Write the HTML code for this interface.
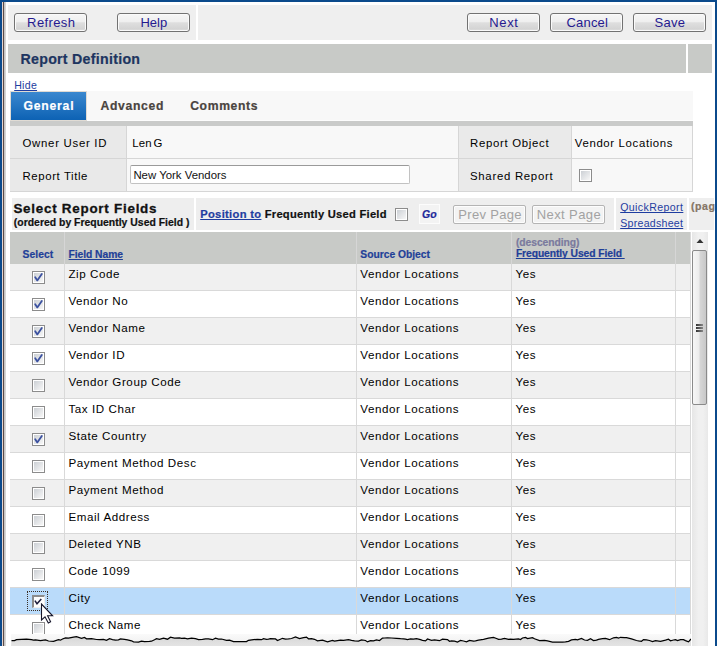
<!DOCTYPE html>
<html><head><meta charset="utf-8"><style>
html,body{margin:0;padding:0;width:717px;height:646px;overflow:hidden;background:#fff;font-family:"Liberation Sans", sans-serif;}
</style></head><body>
<div style="position:absolute;left:0px;top:0px;width:717px;height:646px;background:#fff"></div><div style="position:absolute;left:8px;top:5px;width:188px;height:35px;background:#efefef"></div><div style="position:absolute;left:198px;top:5px;width:514px;height:35px;background:#efefef"></div><div style="position:absolute;left:14px;top:13px;width:71px;height:17px;border:1px solid #727272;border-radius:3px;background:linear-gradient(#f6f6f6 0%,#efefef 45%,#dedede 52%,#d4d4d4 88%,#e2e2e2 100%);box-shadow:inset 0 0 0 1px #fafafa"></div><div style="position:absolute;left:27.10px;top:16px;font-size:13.00px;line-height:1;font-weight:normal;font-style:normal;letter-spacing:0.398px;white-space:pre;color:#25198f">Refresh</div><div style="position:absolute;left:117px;top:13px;width:71px;height:17px;border:1px solid #727272;border-radius:3px;background:linear-gradient(#f6f6f6 0%,#efefef 45%,#dedede 52%,#d4d4d4 88%,#e2e2e2 100%);box-shadow:inset 0 0 0 1px #fafafa"></div><div style="position:absolute;left:140.40px;top:16px;font-size:13.00px;line-height:1;font-weight:normal;font-style:normal;letter-spacing:0.020px;white-space:pre;color:#25198f">Help</div><div style="position:absolute;left:467px;top:13px;width:71px;height:17px;border:1px solid #727272;border-radius:3px;background:linear-gradient(#f6f6f6 0%,#efefef 45%,#dedede 52%,#d4d4d4 88%,#e2e2e2 100%);box-shadow:inset 0 0 0 1px #fafafa"></div><div style="position:absolute;left:489.30px;top:16px;font-size:13.00px;line-height:1;font-weight:normal;font-style:normal;letter-spacing:0.624px;white-space:pre;color:#25198f">Next</div><div style="position:absolute;left:550px;top:13px;width:71px;height:17px;border:1px solid #727272;border-radius:3px;background:linear-gradient(#f6f6f6 0%,#efefef 45%,#dedede 52%,#d4d4d4 88%,#e2e2e2 100%);box-shadow:inset 0 0 0 1px #fafafa"></div><div style="position:absolute;left:566.50px;top:16px;font-size:13.00px;line-height:1;font-weight:normal;font-style:normal;letter-spacing:0.186px;white-space:pre;color:#25198f">Cancel</div><div style="position:absolute;left:633px;top:13px;width:71px;height:17px;border:1px solid #727272;border-radius:3px;background:linear-gradient(#f6f6f6 0%,#efefef 45%,#dedede 52%,#d4d4d4 88%,#e2e2e2 100%);box-shadow:inset 0 0 0 1px #fafafa"></div><div style="position:absolute;left:654.60px;top:16px;font-size:13.00px;line-height:1;font-weight:normal;font-style:normal;letter-spacing:0.224px;white-space:pre;color:#25198f">Save</div><div style="position:absolute;left:8px;top:44px;width:678px;height:29px;background:#c8cac7"></div><div style="position:absolute;left:688px;top:44px;width:24px;height:29px;background:#c8cac7"></div><div style="position:absolute;left:20.50px;top:52px;font-size:14.20px;line-height:1;font-weight:bold;font-style:normal;letter-spacing:0.277px;white-space:pre;color:#1d3560;-webkit-text-stroke:0.2px currentColor">Report Definition</div><div style="position:absolute;left:14.20px;top:80px;font-size:10.60px;line-height:1;font-weight:normal;font-style:normal;letter-spacing:0.265px;white-space:pre;color:#1e3da0;text-decoration:underline;text-decoration-skip-ink:none;">Hide</div><div style="position:absolute;left:10px;top:91px;width:683px;height:30px;background:#f8f8f8"></div><div style="position:absolute;left:10px;top:120px;width:683px;height:1px;background:#fdfdfd"></div><div style="position:absolute;left:10px;top:91px;width:77px;height:30px;background:#e0dbd4"></div><div style="position:absolute;left:11px;top:92px;width:75px;height:28px;background:linear-gradient(#3b88cf,#0d62b4)"></div><div style="position:absolute;left:23.40px;top:100px;font-size:12.20px;line-height:1;font-weight:bold;font-style:normal;letter-spacing:0.795px;white-space:pre;color:#fff;-webkit-text-stroke:0.2px currentColor">General</div><div style="position:absolute;left:100.60px;top:100px;font-size:12.20px;line-height:1;font-weight:bold;font-style:normal;letter-spacing:0.642px;white-space:pre;color:#4a4440;-webkit-text-stroke:0.2px currentColor">Advanced</div><div style="position:absolute;left:190.20px;top:100px;font-size:12.20px;line-height:1;font-weight:bold;font-style:normal;letter-spacing:0.621px;white-space:pre;color:#4a4440;-webkit-text-stroke:0.2px currentColor">Comments</div><div style="position:absolute;left:10px;top:121px;width:683px;height:5px;background:#cacbca"></div><div style="position:absolute;left:10px;top:126px;width:683px;height:66px;background:#d6d6d6"></div><div style="position:absolute;left:10px;top:126px;width:116px;height:32px;background:#e9e9e9"></div><div style="position:absolute;left:127px;top:126px;width:331px;height:32px;background:#f8f8f8"></div><div style="position:absolute;left:459px;top:126px;width:112px;height:32px;background:#eaeaea"></div><div style="position:absolute;left:572px;top:126px;width:120px;height:32px;background:#f8f8f8"></div><div style="position:absolute;left:10px;top:159px;width:116px;height:32px;background:#e9e9e9"></div><div style="position:absolute;left:127px;top:159px;width:331px;height:32px;background:#f8f8f8"></div><div style="position:absolute;left:459px;top:159px;width:112px;height:32px;background:#eaeaea"></div><div style="position:absolute;left:572px;top:159px;width:120px;height:32px;background:#f8f8f8"></div><div style="position:absolute;left:22.50px;top:138px;font-size:11.40px;line-height:1;font-weight:normal;font-style:normal;letter-spacing:0.719px;white-space:pre;color:#000">Owner User ID</div><div style="position:absolute;left:132.30px;top:138px;font-size:11.40px;line-height:1;font-weight:normal;font-style:normal;letter-spacing:0.092px;white-space:pre;color:#000">Len</div><div style="position:absolute;left:153.60px;top:138px;font-size:11.40px;line-height:1;font-weight:normal;font-style:normal;letter-spacing:0.000px;white-space:pre;color:#000">G</div><div style="position:absolute;left:22.50px;top:171px;font-size:11.40px;line-height:1;font-weight:normal;font-style:normal;letter-spacing:0.610px;white-space:pre;color:#000">Report Title</div><div style="position:absolute;left:470.00px;top:138px;font-size:11.40px;line-height:1;font-weight:normal;font-style:normal;letter-spacing:0.698px;white-space:pre;color:#000">Report Object</div><div style="position:absolute;left:574.80px;top:138px;font-size:11.40px;line-height:1;font-weight:normal;font-style:normal;letter-spacing:0.647px;white-space:pre;color:#000">Vendor Locations</div><div style="position:absolute;left:470.00px;top:171px;font-size:11.40px;line-height:1;font-weight:normal;font-style:normal;letter-spacing:0.713px;white-space:pre;color:#000">Shared Report</div><div style="position:absolute;left:130px;top:165px;width:278px;height:17px;background:#fff;border:1px solid #c2c2c2;border-top-color:#9a9a9a;border-radius:2px"></div><div style="position:absolute;left:133.40px;top:170px;font-size:11.40px;line-height:1;font-weight:normal;font-style:normal;letter-spacing:0.003px;white-space:pre;color:#111">New York Vendors</div><div style="position:absolute;left:579px;top:169px;width:11px;height:11px;border:1px solid #8c8c8c;background:#fff"></div><div style="position:absolute;left:581px;top:171px;width:9px;height:9px;background:linear-gradient(135deg,#ccd0d5,#f7f7f7)"></div><div style="position:absolute;left:12px;top:198px;width:182px;height:32px;background:#eeeeee"></div><div style="position:absolute;left:13.40px;top:202px;font-size:13.40px;line-height:1;font-weight:bold;font-style:normal;letter-spacing:0.756px;white-space:pre;color:#111;-webkit-text-stroke:0.3px #111">Select Report Fields</div><div style="position:absolute;left:13.80px;top:218px;font-size:10.40px;line-height:1;font-weight:bold;font-style:normal;letter-spacing:0.021px;white-space:pre;color:#111;-webkit-text-stroke:0.2px currentColor">(ordered by Frequently Used Field )</div><div style="position:absolute;left:196px;top:198px;width:418px;height:32px;background:#eeeeee"></div><div style="position:absolute;left:200.20px;top:209px;font-size:11.20px;line-height:1;font-weight:bold;font-style:normal;letter-spacing:0.314px;white-space:pre;color:#1e3da0;text-decoration:underline;text-decoration-skip-ink:none;;-webkit-text-stroke:0.2px currentColor">Position to</div><div style="position:absolute;left:264.70px;top:209px;font-size:11.20px;line-height:1;font-weight:bold;font-style:normal;letter-spacing:0.250px;white-space:pre;color:#111;-webkit-text-stroke:0.2px currentColor">Frequently Used Field</div><div style="position:absolute;left:395px;top:208px;width:11px;height:11px;border:1px solid #8c8c8c;background:#fff"></div><div style="position:absolute;left:397px;top:210px;width:9px;height:9px;background:linear-gradient(135deg,#ccd0d5,#f7f7f7)"></div><div style="position:absolute;left:419px;top:204px;width:21px;height:20px;background:#f3f3f3;border:1px solid #fcfcfc;box-sizing:border-box"></div><div style="position:absolute;left:422.00px;top:209px;font-size:10.50px;line-height:1;font-weight:bold;font-style:italic;letter-spacing:0.016px;white-space:pre;color:#1e2a9a;-webkit-text-stroke:0.2px currentColor">Go</div><div style="position:absolute;left:453px;top:205px;width:71px;height:17px;border:1px solid #b4b4b4;border-radius:2px;background:#f3f3f3;box-shadow:inset 0 0 0 1px #fdfdfd"></div><div style="position:absolute;left:458.30px;top:208px;font-size:13.00px;line-height:1;font-weight:normal;font-style:normal;letter-spacing:0.325px;white-space:pre;color:#a2a2a2">Prev Page</div><div style="position:absolute;left:532px;top:205px;width:71px;height:17px;border:1px solid #b4b4b4;border-radius:2px;background:#f3f3f3;box-shadow:inset 0 0 0 1px #fdfdfd"></div><div style="position:absolute;left:536.70px;top:208px;font-size:13.00px;line-height:1;font-weight:normal;font-style:normal;letter-spacing:0.413px;white-space:pre;color:#a2a2a2">Next Page</div><div style="position:absolute;left:616px;top:198px;width:71px;height:32px;background:#eeeeee"></div><div style="position:absolute;left:620.20px;top:202px;font-size:10.60px;line-height:1;font-weight:normal;font-style:normal;letter-spacing:0.389px;white-space:pre;color:#1e3da0;text-decoration:underline;text-decoration-skip-ink:none;">QuickReport</div><div style="position:absolute;left:620.20px;top:218px;font-size:10.60px;line-height:1;font-weight:normal;font-style:normal;letter-spacing:0.269px;white-space:pre;color:#1e3da0;text-decoration:underline;text-decoration-skip-ink:none;">Spreadsheet</div><div style="position:absolute;left:689px;top:198px;width:25px;height:32px;background:#eeeeee"></div><div style="position:absolute;left:690.90px;top:201px;font-size:10.60px;line-height:1;font-weight:bold;font-style:normal;letter-spacing:0.600px;white-space:pre;color:#857565;-webkit-text-stroke:0.2px currentColor">(pag</div><div style="position:absolute;left:10px;top:232px;width:681px;height:402px;background:#d9d9d9"></div><div style="position:absolute;left:10px;top:232px;width:680px;height:32px;background:#c8cac7"></div><div style="position:absolute;left:64px;top:232px;width:1px;height:32px;background:#d6d6d6"></div><div style="position:absolute;left:356px;top:232px;width:1px;height:32px;background:#d6d6d6"></div><div style="position:absolute;left:511px;top:232px;width:1px;height:32px;background:#d6d6d6"></div><div style="position:absolute;left:675px;top:232px;width:1px;height:32px;background:#d6d6d6"></div><div style="position:absolute;left:22.50px;top:250px;font-size:10.30px;line-height:1;font-weight:bold;font-style:normal;letter-spacing:0.071px;white-space:pre;color:#1f3f98;;-webkit-text-stroke:0.2px currentColor">Select</div><div style="position:absolute;left:68.60px;top:250px;font-size:10.30px;line-height:1;font-weight:bold;font-style:normal;letter-spacing:-0.061px;white-space:pre;color:#1f3f98;text-decoration:underline;text-decoration-skip-ink:none;;-webkit-text-stroke:0.2px currentColor">Field Name</div><div style="position:absolute;left:360.30px;top:250px;font-size:10.30px;line-height:1;font-weight:bold;font-style:normal;letter-spacing:-0.011px;white-space:pre;color:#1f3f98;;-webkit-text-stroke:0.2px currentColor">Source Object</div><div style="position:absolute;left:515.90px;top:238px;font-size:10.30px;line-height:1;font-weight:bold;font-style:normal;letter-spacing:-0.045px;white-space:pre;color:#7a7a9e;-webkit-text-stroke:0.2px currentColor">(descending)</div><div style="position:absolute;left:515.90px;top:249px;font-size:10.30px;line-height:1;font-weight:bold;font-style:normal;letter-spacing:-0.075px;white-space:pre;color:#1f3f98;text-decoration:underline;text-decoration-skip-ink:none;;-webkit-text-stroke:0.2px currentColor">Frequently Used Field&nbsp;</div><div style="position:absolute;left:10px;top:264px;width:54px;height:26px;background:#f0f0f0"></div><div style="position:absolute;left:65px;top:264px;width:291px;height:26px;background:#f0f0f0"></div><div style="position:absolute;left:357px;top:264px;width:154px;height:26px;background:#f0f0f0"></div><div style="position:absolute;left:512px;top:264px;width:163px;height:26px;background:#f0f0f0"></div><div style="position:absolute;left:676px;top:264px;width:14px;height:26px;background:#f0f0f0"></div><div style="position:absolute;left:32px;top:271px;width:11px;height:11px;border:1px solid #8c8c8c;background:#fff"></div><div style="position:absolute;left:34px;top:273px;width:9px;height:9px;background:linear-gradient(135deg,#ccd0d5,#f7f7f7)"></div><svg style="position:absolute;left:32px;top:271px" width="13" height="13" viewBox="0 0 13 13"><path d="M3.2 6.2 L5.3 9.4 L9.8 3" fill="none" stroke="#3b51a0" stroke-width="1.8" stroke-linejoin="round" stroke-linecap="round"/></svg><div style="position:absolute;left:68.40px;top:268px;font-size:11.60px;line-height:1;font-weight:normal;font-style:normal;letter-spacing:0.570px;white-space:pre;color:#000">Zip Code</div><div style="position:absolute;left:360.30px;top:268px;font-size:11.60px;line-height:1;font-weight:normal;font-style:normal;letter-spacing:0.570px;white-space:pre;color:#000">Vendor Locations</div><div style="position:absolute;left:515.50px;top:268px;font-size:11.60px;line-height:1;font-weight:normal;font-style:normal;letter-spacing:0.570px;white-space:pre;color:#000">Yes</div><div style="position:absolute;left:10px;top:291px;width:54px;height:26px;background:#ffffff"></div><div style="position:absolute;left:65px;top:291px;width:291px;height:26px;background:#ffffff"></div><div style="position:absolute;left:357px;top:291px;width:154px;height:26px;background:#ffffff"></div><div style="position:absolute;left:512px;top:291px;width:163px;height:26px;background:#ffffff"></div><div style="position:absolute;left:676px;top:291px;width:14px;height:26px;background:#ffffff"></div><div style="position:absolute;left:32px;top:298px;width:11px;height:11px;border:1px solid #8c8c8c;background:#fff"></div><div style="position:absolute;left:34px;top:300px;width:9px;height:9px;background:linear-gradient(135deg,#ccd0d5,#f7f7f7)"></div><svg style="position:absolute;left:32px;top:298px" width="13" height="13" viewBox="0 0 13 13"><path d="M3.2 6.2 L5.3 9.4 L9.8 3" fill="none" stroke="#3b51a0" stroke-width="1.8" stroke-linejoin="round" stroke-linecap="round"/></svg><div style="position:absolute;left:68.40px;top:295px;font-size:11.60px;line-height:1;font-weight:normal;font-style:normal;letter-spacing:0.570px;white-space:pre;color:#000">Vendor No</div><div style="position:absolute;left:360.30px;top:295px;font-size:11.60px;line-height:1;font-weight:normal;font-style:normal;letter-spacing:0.570px;white-space:pre;color:#000">Vendor Locations</div><div style="position:absolute;left:515.50px;top:295px;font-size:11.60px;line-height:1;font-weight:normal;font-style:normal;letter-spacing:0.570px;white-space:pre;color:#000">Yes</div><div style="position:absolute;left:10px;top:318px;width:54px;height:26px;background:#f0f0f0"></div><div style="position:absolute;left:65px;top:318px;width:291px;height:26px;background:#f0f0f0"></div><div style="position:absolute;left:357px;top:318px;width:154px;height:26px;background:#f0f0f0"></div><div style="position:absolute;left:512px;top:318px;width:163px;height:26px;background:#f0f0f0"></div><div style="position:absolute;left:676px;top:318px;width:14px;height:26px;background:#f0f0f0"></div><div style="position:absolute;left:32px;top:325px;width:11px;height:11px;border:1px solid #8c8c8c;background:#fff"></div><div style="position:absolute;left:34px;top:327px;width:9px;height:9px;background:linear-gradient(135deg,#ccd0d5,#f7f7f7)"></div><svg style="position:absolute;left:32px;top:325px" width="13" height="13" viewBox="0 0 13 13"><path d="M3.2 6.2 L5.3 9.4 L9.8 3" fill="none" stroke="#3b51a0" stroke-width="1.8" stroke-linejoin="round" stroke-linecap="round"/></svg><div style="position:absolute;left:68.40px;top:322px;font-size:11.60px;line-height:1;font-weight:normal;font-style:normal;letter-spacing:0.570px;white-space:pre;color:#000">Vendor Name</div><div style="position:absolute;left:360.30px;top:322px;font-size:11.60px;line-height:1;font-weight:normal;font-style:normal;letter-spacing:0.570px;white-space:pre;color:#000">Vendor Locations</div><div style="position:absolute;left:515.50px;top:322px;font-size:11.60px;line-height:1;font-weight:normal;font-style:normal;letter-spacing:0.570px;white-space:pre;color:#000">Yes</div><div style="position:absolute;left:10px;top:345px;width:54px;height:26px;background:#ffffff"></div><div style="position:absolute;left:65px;top:345px;width:291px;height:26px;background:#ffffff"></div><div style="position:absolute;left:357px;top:345px;width:154px;height:26px;background:#ffffff"></div><div style="position:absolute;left:512px;top:345px;width:163px;height:26px;background:#ffffff"></div><div style="position:absolute;left:676px;top:345px;width:14px;height:26px;background:#ffffff"></div><div style="position:absolute;left:32px;top:352px;width:11px;height:11px;border:1px solid #8c8c8c;background:#fff"></div><div style="position:absolute;left:34px;top:354px;width:9px;height:9px;background:linear-gradient(135deg,#ccd0d5,#f7f7f7)"></div><svg style="position:absolute;left:32px;top:352px" width="13" height="13" viewBox="0 0 13 13"><path d="M3.2 6.2 L5.3 9.4 L9.8 3" fill="none" stroke="#3b51a0" stroke-width="1.8" stroke-linejoin="round" stroke-linecap="round"/></svg><div style="position:absolute;left:68.40px;top:349px;font-size:11.60px;line-height:1;font-weight:normal;font-style:normal;letter-spacing:0.570px;white-space:pre;color:#000">Vendor ID</div><div style="position:absolute;left:360.30px;top:349px;font-size:11.60px;line-height:1;font-weight:normal;font-style:normal;letter-spacing:0.570px;white-space:pre;color:#000">Vendor Locations</div><div style="position:absolute;left:515.50px;top:349px;font-size:11.60px;line-height:1;font-weight:normal;font-style:normal;letter-spacing:0.570px;white-space:pre;color:#000">Yes</div><div style="position:absolute;left:10px;top:372px;width:54px;height:26px;background:#f0f0f0"></div><div style="position:absolute;left:65px;top:372px;width:291px;height:26px;background:#f0f0f0"></div><div style="position:absolute;left:357px;top:372px;width:154px;height:26px;background:#f0f0f0"></div><div style="position:absolute;left:512px;top:372px;width:163px;height:26px;background:#f0f0f0"></div><div style="position:absolute;left:676px;top:372px;width:14px;height:26px;background:#f0f0f0"></div><div style="position:absolute;left:32px;top:379px;width:11px;height:11px;border:1px solid #8c8c8c;background:#fff"></div><div style="position:absolute;left:34px;top:381px;width:9px;height:9px;background:linear-gradient(135deg,#ccd0d5,#f7f7f7)"></div><div style="position:absolute;left:68.40px;top:376px;font-size:11.60px;line-height:1;font-weight:normal;font-style:normal;letter-spacing:0.570px;white-space:pre;color:#000">Vendor Group Code</div><div style="position:absolute;left:360.30px;top:376px;font-size:11.60px;line-height:1;font-weight:normal;font-style:normal;letter-spacing:0.570px;white-space:pre;color:#000">Vendor Locations</div><div style="position:absolute;left:515.50px;top:376px;font-size:11.60px;line-height:1;font-weight:normal;font-style:normal;letter-spacing:0.570px;white-space:pre;color:#000">Yes</div><div style="position:absolute;left:10px;top:399px;width:54px;height:26px;background:#ffffff"></div><div style="position:absolute;left:65px;top:399px;width:291px;height:26px;background:#ffffff"></div><div style="position:absolute;left:357px;top:399px;width:154px;height:26px;background:#ffffff"></div><div style="position:absolute;left:512px;top:399px;width:163px;height:26px;background:#ffffff"></div><div style="position:absolute;left:676px;top:399px;width:14px;height:26px;background:#ffffff"></div><div style="position:absolute;left:32px;top:406px;width:11px;height:11px;border:1px solid #8c8c8c;background:#fff"></div><div style="position:absolute;left:34px;top:408px;width:9px;height:9px;background:linear-gradient(135deg,#ccd0d5,#f7f7f7)"></div><div style="position:absolute;left:68.40px;top:403px;font-size:11.60px;line-height:1;font-weight:normal;font-style:normal;letter-spacing:0.570px;white-space:pre;color:#000">Tax ID Char</div><div style="position:absolute;left:360.30px;top:403px;font-size:11.60px;line-height:1;font-weight:normal;font-style:normal;letter-spacing:0.570px;white-space:pre;color:#000">Vendor Locations</div><div style="position:absolute;left:515.50px;top:403px;font-size:11.60px;line-height:1;font-weight:normal;font-style:normal;letter-spacing:0.570px;white-space:pre;color:#000">Yes</div><div style="position:absolute;left:10px;top:426px;width:54px;height:26px;background:#f0f0f0"></div><div style="position:absolute;left:65px;top:426px;width:291px;height:26px;background:#f0f0f0"></div><div style="position:absolute;left:357px;top:426px;width:154px;height:26px;background:#f0f0f0"></div><div style="position:absolute;left:512px;top:426px;width:163px;height:26px;background:#f0f0f0"></div><div style="position:absolute;left:676px;top:426px;width:14px;height:26px;background:#f0f0f0"></div><div style="position:absolute;left:32px;top:433px;width:11px;height:11px;border:1px solid #8c8c8c;background:#fff"></div><div style="position:absolute;left:34px;top:435px;width:9px;height:9px;background:linear-gradient(135deg,#ccd0d5,#f7f7f7)"></div><svg style="position:absolute;left:32px;top:433px" width="13" height="13" viewBox="0 0 13 13"><path d="M3.2 6.2 L5.3 9.4 L9.8 3" fill="none" stroke="#3b51a0" stroke-width="1.8" stroke-linejoin="round" stroke-linecap="round"/></svg><div style="position:absolute;left:68.40px;top:430px;font-size:11.60px;line-height:1;font-weight:normal;font-style:normal;letter-spacing:0.570px;white-space:pre;color:#000">State Country</div><div style="position:absolute;left:360.30px;top:430px;font-size:11.60px;line-height:1;font-weight:normal;font-style:normal;letter-spacing:0.570px;white-space:pre;color:#000">Vendor Locations</div><div style="position:absolute;left:515.50px;top:430px;font-size:11.60px;line-height:1;font-weight:normal;font-style:normal;letter-spacing:0.570px;white-space:pre;color:#000">Yes</div><div style="position:absolute;left:10px;top:453px;width:54px;height:26px;background:#ffffff"></div><div style="position:absolute;left:65px;top:453px;width:291px;height:26px;background:#ffffff"></div><div style="position:absolute;left:357px;top:453px;width:154px;height:26px;background:#ffffff"></div><div style="position:absolute;left:512px;top:453px;width:163px;height:26px;background:#ffffff"></div><div style="position:absolute;left:676px;top:453px;width:14px;height:26px;background:#ffffff"></div><div style="position:absolute;left:32px;top:460px;width:11px;height:11px;border:1px solid #8c8c8c;background:#fff"></div><div style="position:absolute;left:34px;top:462px;width:9px;height:9px;background:linear-gradient(135deg,#ccd0d5,#f7f7f7)"></div><div style="position:absolute;left:68.40px;top:457px;font-size:11.60px;line-height:1;font-weight:normal;font-style:normal;letter-spacing:0.570px;white-space:pre;color:#000">Payment Method Desc</div><div style="position:absolute;left:360.30px;top:457px;font-size:11.60px;line-height:1;font-weight:normal;font-style:normal;letter-spacing:0.570px;white-space:pre;color:#000">Vendor Locations</div><div style="position:absolute;left:515.50px;top:457px;font-size:11.60px;line-height:1;font-weight:normal;font-style:normal;letter-spacing:0.570px;white-space:pre;color:#000">Yes</div><div style="position:absolute;left:10px;top:480px;width:54px;height:26px;background:#f0f0f0"></div><div style="position:absolute;left:65px;top:480px;width:291px;height:26px;background:#f0f0f0"></div><div style="position:absolute;left:357px;top:480px;width:154px;height:26px;background:#f0f0f0"></div><div style="position:absolute;left:512px;top:480px;width:163px;height:26px;background:#f0f0f0"></div><div style="position:absolute;left:676px;top:480px;width:14px;height:26px;background:#f0f0f0"></div><div style="position:absolute;left:32px;top:487px;width:11px;height:11px;border:1px solid #8c8c8c;background:#fff"></div><div style="position:absolute;left:34px;top:489px;width:9px;height:9px;background:linear-gradient(135deg,#ccd0d5,#f7f7f7)"></div><div style="position:absolute;left:68.40px;top:484px;font-size:11.60px;line-height:1;font-weight:normal;font-style:normal;letter-spacing:0.570px;white-space:pre;color:#000">Payment Method</div><div style="position:absolute;left:360.30px;top:484px;font-size:11.60px;line-height:1;font-weight:normal;font-style:normal;letter-spacing:0.570px;white-space:pre;color:#000">Vendor Locations</div><div style="position:absolute;left:515.50px;top:484px;font-size:11.60px;line-height:1;font-weight:normal;font-style:normal;letter-spacing:0.570px;white-space:pre;color:#000">Yes</div><div style="position:absolute;left:10px;top:507px;width:54px;height:26px;background:#ffffff"></div><div style="position:absolute;left:65px;top:507px;width:291px;height:26px;background:#ffffff"></div><div style="position:absolute;left:357px;top:507px;width:154px;height:26px;background:#ffffff"></div><div style="position:absolute;left:512px;top:507px;width:163px;height:26px;background:#ffffff"></div><div style="position:absolute;left:676px;top:507px;width:14px;height:26px;background:#ffffff"></div><div style="position:absolute;left:32px;top:514px;width:11px;height:11px;border:1px solid #8c8c8c;background:#fff"></div><div style="position:absolute;left:34px;top:516px;width:9px;height:9px;background:linear-gradient(135deg,#ccd0d5,#f7f7f7)"></div><div style="position:absolute;left:68.40px;top:511px;font-size:11.60px;line-height:1;font-weight:normal;font-style:normal;letter-spacing:0.570px;white-space:pre;color:#000">Email Address</div><div style="position:absolute;left:360.30px;top:511px;font-size:11.60px;line-height:1;font-weight:normal;font-style:normal;letter-spacing:0.570px;white-space:pre;color:#000">Vendor Locations</div><div style="position:absolute;left:515.50px;top:511px;font-size:11.60px;line-height:1;font-weight:normal;font-style:normal;letter-spacing:0.570px;white-space:pre;color:#000">Yes</div><div style="position:absolute;left:10px;top:534px;width:54px;height:26px;background:#f0f0f0"></div><div style="position:absolute;left:65px;top:534px;width:291px;height:26px;background:#f0f0f0"></div><div style="position:absolute;left:357px;top:534px;width:154px;height:26px;background:#f0f0f0"></div><div style="position:absolute;left:512px;top:534px;width:163px;height:26px;background:#f0f0f0"></div><div style="position:absolute;left:676px;top:534px;width:14px;height:26px;background:#f0f0f0"></div><div style="position:absolute;left:32px;top:541px;width:11px;height:11px;border:1px solid #8c8c8c;background:#fff"></div><div style="position:absolute;left:34px;top:543px;width:9px;height:9px;background:linear-gradient(135deg,#ccd0d5,#f7f7f7)"></div><div style="position:absolute;left:68.40px;top:538px;font-size:11.60px;line-height:1;font-weight:normal;font-style:normal;letter-spacing:0.570px;white-space:pre;color:#000">Deleted YNB</div><div style="position:absolute;left:360.30px;top:538px;font-size:11.60px;line-height:1;font-weight:normal;font-style:normal;letter-spacing:0.570px;white-space:pre;color:#000">Vendor Locations</div><div style="position:absolute;left:515.50px;top:538px;font-size:11.60px;line-height:1;font-weight:normal;font-style:normal;letter-spacing:0.570px;white-space:pre;color:#000">Yes</div><div style="position:absolute;left:10px;top:561px;width:54px;height:26px;background:#ffffff"></div><div style="position:absolute;left:65px;top:561px;width:291px;height:26px;background:#ffffff"></div><div style="position:absolute;left:357px;top:561px;width:154px;height:26px;background:#ffffff"></div><div style="position:absolute;left:512px;top:561px;width:163px;height:26px;background:#ffffff"></div><div style="position:absolute;left:676px;top:561px;width:14px;height:26px;background:#ffffff"></div><div style="position:absolute;left:32px;top:568px;width:11px;height:11px;border:1px solid #8c8c8c;background:#fff"></div><div style="position:absolute;left:34px;top:570px;width:9px;height:9px;background:linear-gradient(135deg,#ccd0d5,#f7f7f7)"></div><div style="position:absolute;left:68.40px;top:565px;font-size:11.60px;line-height:1;font-weight:normal;font-style:normal;letter-spacing:0.570px;white-space:pre;color:#000">Code 1099</div><div style="position:absolute;left:360.30px;top:565px;font-size:11.60px;line-height:1;font-weight:normal;font-style:normal;letter-spacing:0.570px;white-space:pre;color:#000">Vendor Locations</div><div style="position:absolute;left:515.50px;top:565px;font-size:11.60px;line-height:1;font-weight:normal;font-style:normal;letter-spacing:0.570px;white-space:pre;color:#000">Yes</div><div style="position:absolute;left:10px;top:588px;width:54px;height:26px;background:#badbfa"></div><div style="position:absolute;left:65px;top:588px;width:291px;height:26px;background:#badbfa"></div><div style="position:absolute;left:357px;top:588px;width:154px;height:26px;background:#badbfa"></div><div style="position:absolute;left:512px;top:588px;width:163px;height:26px;background:#badbfa"></div><div style="position:absolute;left:676px;top:588px;width:14px;height:26px;background:#badbfa"></div><div style="position:absolute;left:68.40px;top:592px;font-size:11.60px;line-height:1;font-weight:normal;font-style:normal;letter-spacing:0.570px;white-space:pre;color:#000">City</div><div style="position:absolute;left:360.30px;top:592px;font-size:11.60px;line-height:1;font-weight:normal;font-style:normal;letter-spacing:0.570px;white-space:pre;color:#000">Vendor Locations</div><div style="position:absolute;left:515.50px;top:592px;font-size:11.60px;line-height:1;font-weight:normal;font-style:normal;letter-spacing:0.570px;white-space:pre;color:#000">Yes</div><div style="position:absolute;left:10px;top:615px;width:54px;height:19px;background:#ffffff"></div><div style="position:absolute;left:65px;top:615px;width:291px;height:19px;background:#ffffff"></div><div style="position:absolute;left:357px;top:615px;width:154px;height:19px;background:#ffffff"></div><div style="position:absolute;left:512px;top:615px;width:163px;height:19px;background:#ffffff"></div><div style="position:absolute;left:676px;top:615px;width:14px;height:19px;background:#ffffff"></div><div style="position:absolute;left:32px;top:622px;width:11px;height:11px;border:1px solid #8c8c8c;background:#fff"></div><div style="position:absolute;left:34px;top:624px;width:9px;height:9px;background:linear-gradient(135deg,#ccd0d5,#f7f7f7)"></div><div style="position:absolute;left:68.40px;top:619px;font-size:11.60px;line-height:1;font-weight:normal;font-style:normal;letter-spacing:0.570px;white-space:pre;color:#000">Check Name</div><div style="position:absolute;left:360.30px;top:619px;font-size:11.60px;line-height:1;font-weight:normal;font-style:normal;letter-spacing:0.570px;white-space:pre;color:#000">Vendor Locations</div><div style="position:absolute;left:515.50px;top:619px;font-size:11.60px;line-height:1;font-weight:normal;font-style:normal;letter-spacing:0.570px;white-space:pre;color:#000">Yes</div><div style="position:absolute;left:27px;top:591px;width:19px;height:18px;border:1px dotted #3a2e24"></div><div style="position:absolute;left:31px;top:594px;width:15px;height:15px;background:#badbfa"></div><div style="position:absolute;left:32px;top:595px;width:10px;height:10px;border-top:2px solid #8c8c8c;border-left:2px solid #8c8c8c;border-right:1px solid #eeeeee;border-bottom:1px solid #eeeeee;background:#fdfdfd"></div><svg style="position:absolute;left:32px;top:595px" width="13" height="13" viewBox="0 0 13 13"><path d="M3.3 6.2 L5 8.8 L8.8 4.6" fill="none" stroke="#1c1c3c" stroke-width="1.5" stroke-linejoin="miter" stroke-linecap="square"/></svg><svg style="position:absolute;left:40px;top:603px" width="16" height="22" viewBox="0 0 16 22"><path d="M1.5 1 L1.5 17 L5 13.8 L8.3 20 L10.6 18.8 L7.6 12.8 L12.6 12.8 Z" fill="#fff" stroke="#15152a" stroke-width="1.1" stroke-linejoin="miter"/></svg><div style="position:absolute;left:692px;top:232px;width:16px;height:414px;background:linear-gradient(90deg,#e6e6e6,#f0f0f0 40%,#f0f0f0 70%,#e8e8e8)"></div><svg style="position:absolute;left:692px;top:232px" width="16" height="18" viewBox="0 0 16 18"><path d="M4.5 11 L8 7 L11.5 11 Z" fill="#333"/></svg><div style="position:absolute;left:692px;top:250px;width:13px;height:153px;border:1px solid #8a8a8a;border-radius:2px;background:linear-gradient(90deg,#f6f6f6,#ececec 45%,#d6d6d6 55%,#c8c8c8)"></div><div style="position:absolute;left:696px;top:324px;width:7px;height:2px;background:linear-gradient(90deg,#333,#888)"></div><div style="position:absolute;left:696px;top:327px;width:7px;height:2px;background:linear-gradient(90deg,#333,#888)"></div><div style="position:absolute;left:696px;top:330px;width:7px;height:2px;background:linear-gradient(90deg,#333,#888)"></div><svg style="position:absolute;left:11px;top:620px" width="680" height="26" viewBox="0 0 680 26">
<defs><linearGradient id="g1" x1="0" y1="0" x2="0" y2="1"><stop offset="0" stop-color="#fafafa"/><stop offset="1" stop-color="#eeeeee"/></linearGradient>
<linearGradient id="g2" x1="0" y1="0" x2="0" y2="1"><stop offset="0" stop-color="#d4d4d4"/><stop offset="0.35" stop-color="#dedede"/><stop offset="1" stop-color="#e8e8e8"/></linearGradient></defs>
<rect x="0" y="14" width="680" height="12" fill="url(#g1)"/>
<path d="M0.5,20.5 L3.5,20.5 L5.5,19.6 L10.5,19.4 L15.5,19.1 L20.5,19.6 L22.5,20.1 L24.5,19.8 L29.5,20.5 L34.5,20.0 L37.5,21.0 L42.5,21.3 L47.5,19.7 L49.5,20.2 L51.5,19.0 L54.5,17.9 L57.5,18.0 L62.5,17.2 L65.5,16.7 L70.5,18.3 L73.5,17.5 L75.5,18.8 L80.5,18.6 L85.5,19.5 L88.5,19.7 L92.5,19.4 L95.5,20.3 L98.5,18.7 L101.5,19.6 L104.5,20.0 L107.5,19.9 L109.5,18.9 L113.5,19.4 L116.5,19.8 L120.5,20.8 L122.5,21.8 L127.5,22.0 L130.5,21.2 L133.5,21.6 L138.5,21.4 L140.5,21.2 L143.5,19.8 L145.5,18.6 L148.5,19.4 L152.5,18.1 L156.5,19.2 L159.5,17.2 L163.5,18.1 L168.5,17.9 L170.5,18.3 L173.5,18.2 L176.5,18.9 L180.5,18.1 L184.5,18.6 L187.5,19.5 L191.5,19.3 L194.5,18.8 L197.5,18.8 L201.5,19.7 L204.5,18.2 L207.5,19.0 L210.5,19.0 L215.5,20.3 L218.5,20.2 L222.5,21.7 L227.5,21.7 L230.5,21.7 L235.5,21.6 L237.5,20.3 L242.5,19.6 L246.5,19.3 L250.5,19.7 L252.5,18.7 L255.5,19.4 L257.5,19.2 L259.5,18.7 L264.5,18.9 L266.5,20.6 L271.5,18.3 L274.5,19.2 L277.5,18.9 L280.5,18.5 L284.5,17.0 L288.5,18.7 L292.5,17.7 L295.5,17.1 L297.5,18.8 L300.5,18.7 L303.5,19.3 L306.5,20.8 L311.5,20.2 L316.5,21.8 L321.5,20.4 L323.5,21.2 L326.5,20.6 L329.5,20.1 L332.5,20.3 L337.5,19.7 L340.5,20.4 L343.5,20.9 L347.5,21.0 L350.5,20.0 L354.5,20.5 L356.5,21.9 L359.5,20.6 L362.5,20.8 L365.5,19.9 L368.5,20.5 L371.5,18.1 L373.5,18.0 L376.5,17.8 L380.5,18.0 L385.5,18.3 L389.5,18.7 L392.5,18.8 L394.5,19.1 L396.5,19.5 L399.5,19.0 L402.5,19.2 L405.5,18.7 L409.5,19.7 L411.5,20.3 L414.5,20.9 L416.5,19.0 L420.5,20.3 L423.5,19.8 L428.5,20.7 L431.5,19.1 L436.5,19.6 L438.5,21.3 L440.5,21.0 L443.5,21.1 L446.5,22.0 L449.5,20.5 L452.5,21.0 L455.5,21.8 L458.5,20.4 L462.5,21.0 L464.5,20.8 L467.5,20.2 L472.5,19.3 L477.5,18.1 L482.5,17.5 L485.5,18.5 L487.5,19.4 L490.5,19.1 L493.5,18.3 L497.5,19.4 L499.5,19.2 L502.5,19.4 L507.5,18.9 L509.5,19.5 L511.5,18.0 L514.5,17.4 L516.5,18.5 L521.5,17.6 L523.5,18.8 L528.5,20.7 L533.5,20.5 L536.5,20.9 L541.5,22.0 L546.5,22.0 L551.5,22.0 L554.5,21.8 L557.5,21.3 L560.5,19.9 L564.5,19.5 L566.5,19.9 L570.5,18.4 L573.5,20.0 L576.5,20.4 L579.5,18.8 L582.5,20.6 L585.5,20.2 L587.5,19.4 L591.5,18.6 L594.5,18.3 L598.5,19.7 L602.5,17.8 L605.5,17.5 L607.5,18.2 L609.5,17.3 L613.5,17.6 L615.5,17.6 L620.5,18.8 L625.5,20.5 L627.5,20.9 L630.5,21.3 L632.5,19.6 L635.5,19.8 L638.5,20.5 L641.5,21.7 L644.5,20.6 L649.5,21.4 L654.5,20.2 L657.5,19.2 L659.5,20.8 L662.5,20.0 L664.5,19.7 L666.5,20.6 L669.5,19.6 L672.5,19.7 L674.5,20.6 L677.5,21.8 L680.0,19.0 L680,30 L0,30 Z" fill="url(#g2)"/>
<polyline points="0.5,20.5 3.5,20.5 5.5,19.6 10.5,19.4 15.5,19.1 20.5,19.6 22.5,20.1 24.5,19.8 29.5,20.5 34.5,20.0 37.5,21.0 42.5,21.3 47.5,19.7 49.5,20.2 51.5,19.0 54.5,17.9 57.5,18.0 62.5,17.2 65.5,16.7 70.5,18.3 73.5,17.5 75.5,18.8 80.5,18.6 85.5,19.5 88.5,19.7 92.5,19.4 95.5,20.3 98.5,18.7 101.5,19.6 104.5,20.0 107.5,19.9 109.5,18.9 113.5,19.4 116.5,19.8 120.5,20.8 122.5,21.8 127.5,22.0 130.5,21.2 133.5,21.6 138.5,21.4 140.5,21.2 143.5,19.8 145.5,18.6 148.5,19.4 152.5,18.1 156.5,19.2 159.5,17.2 163.5,18.1 168.5,17.9 170.5,18.3 173.5,18.2 176.5,18.9 180.5,18.1 184.5,18.6 187.5,19.5 191.5,19.3 194.5,18.8 197.5,18.8 201.5,19.7 204.5,18.2 207.5,19.0 210.5,19.0 215.5,20.3 218.5,20.2 222.5,21.7 227.5,21.7 230.5,21.7 235.5,21.6 237.5,20.3 242.5,19.6 246.5,19.3 250.5,19.7 252.5,18.7 255.5,19.4 257.5,19.2 259.5,18.7 264.5,18.9 266.5,20.6 271.5,18.3 274.5,19.2 277.5,18.9 280.5,18.5 284.5,17.0 288.5,18.7 292.5,17.7 295.5,17.1 297.5,18.8 300.5,18.7 303.5,19.3 306.5,20.8 311.5,20.2 316.5,21.8 321.5,20.4 323.5,21.2 326.5,20.6 329.5,20.1 332.5,20.3 337.5,19.7 340.5,20.4 343.5,20.9 347.5,21.0 350.5,20.0 354.5,20.5 356.5,21.9 359.5,20.6 362.5,20.8 365.5,19.9 368.5,20.5 371.5,18.1 373.5,18.0 376.5,17.8 380.5,18.0 385.5,18.3 389.5,18.7 392.5,18.8 394.5,19.1 396.5,19.5 399.5,19.0 402.5,19.2 405.5,18.7 409.5,19.7 411.5,20.3 414.5,20.9 416.5,19.0 420.5,20.3 423.5,19.8 428.5,20.7 431.5,19.1 436.5,19.6 438.5,21.3 440.5,21.0 443.5,21.1 446.5,22.0 449.5,20.5 452.5,21.0 455.5,21.8 458.5,20.4 462.5,21.0 464.5,20.8 467.5,20.2 472.5,19.3 477.5,18.1 482.5,17.5 485.5,18.5 487.5,19.4 490.5,19.1 493.5,18.3 497.5,19.4 499.5,19.2 502.5,19.4 507.5,18.9 509.5,19.5 511.5,18.0 514.5,17.4 516.5,18.5 521.5,17.6 523.5,18.8 528.5,20.7 533.5,20.5 536.5,20.9 541.5,22.0 546.5,22.0 551.5,22.0 554.5,21.8 557.5,21.3 560.5,19.9 564.5,19.5 566.5,19.9 570.5,18.4 573.5,20.0 576.5,20.4 579.5,18.8 582.5,20.6 585.5,20.2 587.5,19.4 591.5,18.6 594.5,18.3 598.5,19.7 602.5,17.8 605.5,17.5 607.5,18.2 609.5,17.3 613.5,17.6 615.5,17.6 620.5,18.8 625.5,20.5 627.5,20.9 630.5,21.3 632.5,19.6 635.5,19.8 638.5,20.5 641.5,21.7 644.5,20.6 649.5,21.4 654.5,20.2 657.5,19.2 659.5,20.8 662.5,20.0 664.5,19.7 666.5,20.6 669.5,19.6 672.5,19.7 674.5,20.6 677.5,21.8 680.0,19.0" fill="none" stroke="#000" stroke-width="1.25" stroke-linejoin="miter"/>
</svg><div style="position:absolute;left:0px;top:0px;width:717px;height:2px;background:#0b4a8c"></div><div style="position:absolute;left:0px;top:0px;width:2px;height:646px;background:#0b4a8c"></div><div style="position:absolute;left:715px;top:0px;width:2px;height:646px;background:#0b4a8c"></div><div style="position:absolute;left:2px;top:2px;width:1px;height:644px;background:#e6d6d0"></div><div style="position:absolute;left:3px;top:2px;width:1px;height:644px;background:#5b4b49"></div><div style="position:absolute;left:4px;top:2px;width:2px;height:644px;background:linear-gradient(90deg,#bdbdbd,#dedede)"></div>
</body></html>
